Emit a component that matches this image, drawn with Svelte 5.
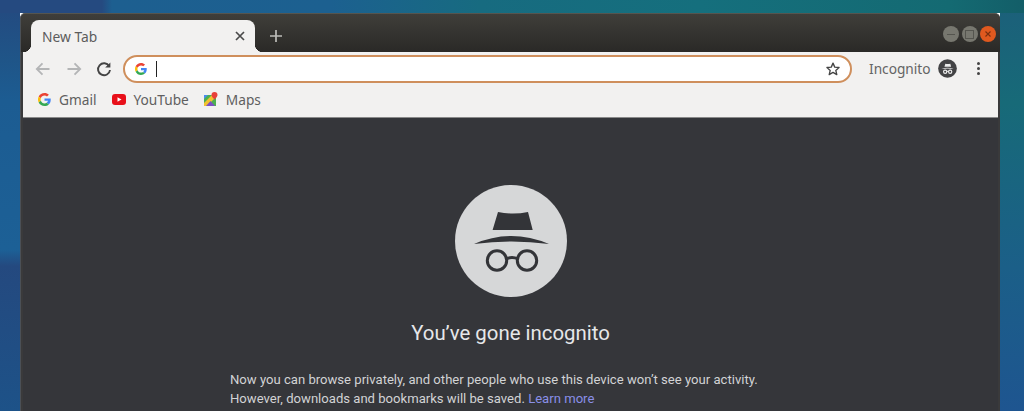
<script lang="ts">
	const bookmarks = ['Gmail', 'YouTube', 'Maps'];
</script>

{#snippet google(size: number)}
	<svg width={size} height={size} viewBox="0 0 48 48" aria-hidden="true">
		<path fill="#EA4335" d="M24 9.5c3.54 0 6.71 1.22 9.21 3.6l6.85-6.85C35.9 2.38 30.47 0 24 0 14.62 0 6.51 5.38 2.56 13.22l7.98 6.19C12.43 13.72 17.74 9.5 24 9.5z" />
		<path fill="#4285F4" d="M46.98 24.55c0-1.57-.15-3.09-.38-4.55H24v9.02h12.94c-.58 2.96-2.26 5.48-4.78 7.18l7.73 6c4.51-4.18 7.09-10.36 7.09-17.65z" />
		<path fill="#FBBC05" d="M10.53 28.59c-.48-1.45-.76-2.99-.76-4.59s.27-3.14.76-4.59l-7.98-6.19C.92 16.46 0 20.12 0 24c0 3.88.92 7.54 2.56 10.78l7.97-6.19z" />
		<path fill="#34A853" d="M24 48c6.48 0 11.93-2.13 15.89-5.81l-7.73-6c-2.15 1.45-4.92 2.3-8.16 2.3-6.26 0-11.57-4.22-13.47-9.91l-7.98 6.19C6.51 42.62 14.62 48 24 48z" />
	</svg>
{/snippet}

{#snippet spy(size: number, bg: string, fg: string, stroke: number)}
	<svg width={size} height={size} viewBox="0 0 114 114" aria-hidden="true">
		<circle cx="57" cy="57" r="56" fill={bg} />
		<path d="M44 28q15 3 30 0l4.700 18H38.600zM20 60q37-16 75 0-37-5-75 0z" fill={fg} />
		<circle cx="43" cy="76.500" r="9.700" fill="none" stroke={fg} stroke-width={stroke} />
		<circle cx="73" cy="76.500" r="9.700" fill="none" stroke={fg} stroke-width={stroke} />
		<path d="M52 75q6-3 12 0" fill="none" stroke={fg} stroke-width={stroke} />
	</svg>
{/snippet}

<div class="desktop">
	<div class="window">
		<header class="tabstrip">
			<div class="tab">
				<span class="tab-title">New Tab</span>
				<svg class="tab-close" width="10" height="10" viewBox="0 0 10 10" aria-hidden="true">
					<path d="M1 1l8 8M9 1l-8 8" stroke="#4a4a4a" stroke-width="1.7" />
				</svg>
			</div>
			<svg class="new-tab" width="12" height="12" viewBox="0 0 12 12" aria-hidden="true">
				<path d="M6 0v12M0 6h12" stroke="#bdbdb9" stroke-width="1.7" />
			</svg>
			<div class="controls">
				<span class="ctl"><i class="min"></i></span>
				<span class="ctl"><i class="max"></i></span>
				<span class="ctl close">
					<svg width="6" height="6" viewBox="0 0 6 6" aria-hidden="true">
						<path d="M.5.5l5 5M5.5.5l-5 5" stroke="#7a3010" stroke-width="1.1" />
					</svg>
				</span>
			</div>
		</header>

		<div class="toolbar">
			<svg class="nav" width="18" height="18" viewBox="0 0 18 18" aria-hidden="true">
				<path d="M15.5 9H3M8.5 3.3L2.8 9l5.700 5.700" fill="none" stroke="#b4b5b6" stroke-width="1.8" />
			</svg>
			<svg class="nav" width="18" height="18" viewBox="0 0 18 18" aria-hidden="true">
				<path d="M2.5 9H15M9.500 3.3L15.200 9l-5.700 5.700" fill="none" stroke="#b4b5b6" stroke-width="1.8" />
			</svg>
			<svg class="nav reload" width="18" height="18" viewBox="0 0 18 18" aria-hidden="true">
				<path d="M14.2 6.2A6 6 0 1 0 15 10" fill="none" stroke="#444" stroke-width="1.9" />
				<path d="M15.4 2.4v5.200h-5.200z" fill="#444" />
			</svg>
			<div class="omnibox">
				<span class="g">{@render google(12)}</span>
				<span class="caret"></span>
				<svg class="star" width="16" height="16" viewBox="0 0 24 24" aria-hidden="true">
					<path d="M12 3.2l2.600 6 6.500.6-4.900 4.300 1.500 6.400L12 17.100l-5.700 3.400 1.500-6.400-4.900-4.300 6.500-.6z" fill="none" stroke="#444" stroke-width="2" stroke-linejoin="round" />
				</svg>
			</div>
			<span class="incognito-label">Incognito</span>
			<span class="avatar">{@render spy(19, '#434345', '#ececec', 7)}</span>
			<span class="menu"><i></i><i></i><i></i></span>
		</div>

		<nav class="bookmarks">
			{#each bookmarks as name}
				<div class="bookmark">
					{#if name === 'Gmail'}
						{@render google(13)}
					{:else if name === 'YouTube'}
						<svg width="14" height="11" viewBox="0 0 14 11" aria-hidden="true">
							<rect width="14" height="11" rx="3" fill="#e8101a" />
							<path d="M5.500 3.200L9.500 5.500 5.500 7.800z" fill="#fff" />
						</svg>
					{:else}
						<svg width="14" height="15" viewBox="0 0 14 15" aria-hidden="true">
							<path d="M0 3h12v11H0z" fill="#4caf50" />
							<path d="M0 11L8 3h4v2L3 14H0z" fill="#f2c230" />
							<path d="M2 14l4.500-5 4.500 5z" fill="#7b4fc4" />
							<path d="M0 3h4L0 7z" fill="#4a8cf0" />
							<path d="M10.500 0a3 3 0 0 1 3 3c0 2-3 4.500-3 4.500s-3-2.500-3-4.500a3 3 0 0 1 3-3z" fill="#e8403a" />
						</svg>
					{/if}
					<span>{name}</span>
				</div>
			{/each}
		</nav>

		<main class="page">
			<span class="spy">{@render spy(114, '#d6d7d8', '#333438', 3)}</span>
			<h1>You’ve gone incognito</h1>
			<p>
				Now you can browse privately, and other people who use this device won’t see your activity.<br />
				However, downloads and bookmarks will be saved. <span class="link">Learn more</span>
			</p>
		</main>
	</div>
</div>

<style>
	:global(body) {
		margin: 0;
	}
	.desktop {
		height: 411px;
		overflow: hidden;
		box-sizing: border-box;
		padding: 13px 24px 0 20px;
		background:
			linear-gradient(to right, #254a80 0, #254a80 102px, #1d5f90 112px, #1c6090 330px, #176b80 480px, #156f7d 700px, #146a72 950px, #135e68 100%) top / 100% 13px no-repeat,
			linear-gradient(#1c5f7a, #176a78 25%, #1b5f88 65%, #1e5590) right / 24px 100% no-repeat,
			linear-gradient(#24497f 0, #1f5588 60px, #1c5c92 100px, #1c6096 250px, #24497f 266px, #1d5288 100%) left / 20px 100% no-repeat;
	}
	.window {
		height: 398px;
		display: flex;
		flex-direction: column;
		box-sizing: border-box;
		border-top: 1px solid #55554f;
		border-left: 1px solid #4b5056;
		border-radius: 5px 5px 0 0;
		padding: 0 2px 0 2px;
		background: #3a3a3b;
		font-family: 'Noto Sans', 'Open Sans', sans-serif;
		color: #5f5f5f;
	}
	.tabstrip {
		height: 38px;
		flex: none;
		display: flex;
		align-items: flex-end;
		margin: 0 -2px 0 -2px;
		padding: 0 4px 0 10px;
		background: linear-gradient(#3f3e3a, #2a2927);
		border-radius: 5px 5px 0 0;
	}
	.tab {
		position: relative;
		width: 224px;
		height: 32px;
		box-sizing: border-box;
		display: flex;
		align-items: center;
		justify-content: space-between;
		padding: 0 10px 0 11px;
		background: #f2f1f0;
		border-radius: 8px 8px 0 0;
	}
	.tab::before,
	.tab::after {
		content: '';
		position: absolute;
		bottom: 0;
		width: 8px;
		height: 8px;
	}
	.tab::before {
		left: -8px;
		background: radial-gradient(circle at 0 0, transparent 8px, #f2f1f0 8.5px);
	}
	.tab::after {
		right: -8px;
		background: radial-gradient(circle at 100% 0, transparent 8px, #f2f1f0 8.5px);
	}
	.tab-title {
		font-size: 13.800px;
		color: #5c5c5c;
	}
	.new-tab {
		margin: 0 0 10px 15px;
	}
	.controls {
		margin-left: auto;
		display: flex;
		gap: 2.500px;
		align-self: center;
		margin-top: 2px;
	}
	.ctl {
		width: 16px;
		height: 16px;
		border-radius: 50%;
		background: #77776f;
		display: flex;
		align-items: center;
		justify-content: center;
	}
	.ctl.close {
		background: #e0591f;
	}
	.min {
		width: 8px;
		height: 1px;
		background: #55554f;
	}
	.max {
		width: 7px;
		height: 7px;
		border: 1px solid #55554f;
	}
	.toolbar {
		height: 33px;
		flex: none;
		display: flex;
		align-items: center;
		background: #f2f1f0;
		padding-left: 11px;
		gap: 13px;
	}
	.reload {
		margin-left: -1px;
	}
	.omnibox {
		flex: none;
		box-sizing: border-box;
		width: 729px;
		height: 28px;
		margin-left: -3px;
		display: flex;
		align-items: center;
		padding: 0 9px 0 10px;
		background: #fff;
		border: 2px solid #cf8f5c;
		border-radius: 14px;
	}
	.g {
		display: flex;
	}
	.caret {
		width: 1px;
		height: 16px;
		margin-left: 9px;
		background: #222;
	}
	.star {
		margin-left: auto;
	}
	.incognito-label {
		margin-left: 4px;
		font-size: 13.700px;
		color: #646464;
	}
	.avatar {
		display: flex;
		margin-left: -6px;
	}
	.menu {
		display: flex;
		flex-direction: column;
		gap: 2px;
		margin-left: 7px;
	}
	.menu i {
		width: 3px;
		height: 3px;
		border-radius: 50%;
		background: #444;
	}
	.bookmarks {
		height: 33px;
		flex: none;
		display: flex;
		align-items: center;
		gap: 15px;
		box-sizing: border-box;
		padding: 0 0 3px 15px;
		background: #f2f1f0;
		border-bottom: 1px solid #8a8a8a;
	}
	.bookmark {
		display: flex;
		align-items: center;
		gap: 8px;
		font-size: 13.700px;
		color: #5f5f5f;
	}
	.page {
		flex: 1;
		min-height: 0;
		display: flex;
		flex-direction: column;
		align-items: center;
		background: #35363a;
		font-family: Roboto, sans-serif;
		padding-top: 66px;
	}
	.spy {
		flex: none;
		display: flex;
	}
	h1 {
		margin: 21px 0 0;
		font-size: 20.400px;
		line-height: 28px;
		font-weight: 400;
		color: #e6e7e9;
	}
	p {
		width: 561px;
		margin: 24px 0 0;
		font-size: 13.100px;
		line-height: 18.500px;
		color: #d2d3d5;
	}
	.link {
		color: #8a8fe8;
	}
</style>
